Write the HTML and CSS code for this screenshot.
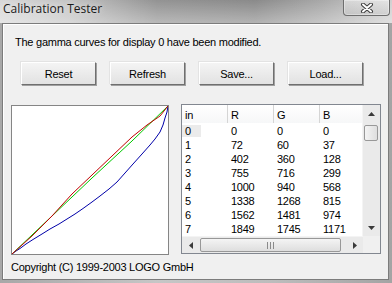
FILE: index.html
```html
<!DOCTYPE html>
<html lang="en">
<head>
  <meta charset="UTF-8">
  <title>Calibration Tester</title>
  <link rel="stylesheet" href="styles.css">
</head>
<body>
  <div class="frame">
    <div class="titlebar">
      <span class="title">Calibration Tester</span>
      <button class="close" title="Close">
        <svg width="14" height="10" viewBox="0 0 14 10">
          <path d="M3 1.5 L11 8.5 M11 1.5 L3 8.5" stroke="#3c3c3c" stroke-width="4" stroke-linecap="round"/>
          <path d="M3 1.5 L11 8.5 M11 1.5 L3 8.5" stroke="#ffffff" stroke-width="2" stroke-linecap="round"/>
        </svg>
      </button>
    </div>

    <div class="client">
      <p class="message">The gamma curves for display 0 have been modified.</p>

      <div class="buttons">
        <button class="btn">Reset</button>
        <button class="btn">Refresh</button>
        <button class="btn">Save...</button>
        <button class="btn">Load...</button>
      </div>

      <div class="main">
        <div class="curves-panel">
          <div class="curves">
            <svg width="156" height="148" viewBox="0 0 156 148">
              <!-- blue -->
              <polyline fill="none" stroke="#0000a8" stroke-width="1"
                points="0,148 4,145 8,142.5 14,138 21,133.5 30,128 38,123 47,118 55,113 63,108 71,102.5 80,96 88,90 97,83 105,76 113,67 121,58 130,48 138,39 143,33 148,26 151,19 153,12 155,6 156,0"/>
              <!-- green -->
              <polyline fill="none" stroke="#00c800" stroke-width="1"
                points="0,148 40,110 80,72 120,35 156,0"/>
              <!-- red -->
              <polyline fill="none" stroke="#c00000" stroke-width="1"
                points="0,148 20,130 40,110 60,88 80,69 100,50 120,31 135,19 148,10 156,0"/>
            </svg>
          </div>
          <p class="copyright">Copyright (C) 1999-2003 LOGO GmbH</p>
        </div>

        <div class="list">
          <div class="list-body">
            <div class="grid">
              <div class="row header">
                <div class="cell">in</div>
                <div class="cell">R</div>
                <div class="cell">G</div>
                <div class="cell">B</div>
              </div>
              <div class="row"><div class="cell focus">0</div><div class="cell">0</div><div class="cell">0</div><div class="cell">0</div></div>
              <div class="row"><div class="cell">1</div><div class="cell">72</div><div class="cell">60</div><div class="cell">37</div></div>
              <div class="row"><div class="cell">2</div><div class="cell">402</div><div class="cell">360</div><div class="cell">128</div></div>
              <div class="row"><div class="cell">3</div><div class="cell">755</div><div class="cell">716</div><div class="cell">299</div></div>
              <div class="row"><div class="cell">4</div><div class="cell">1000</div><div class="cell">940</div><div class="cell">568</div></div>
              <div class="row"><div class="cell">5</div><div class="cell">1338</div><div class="cell">1268</div><div class="cell">815</div></div>
              <div class="row"><div class="cell">6</div><div class="cell">1562</div><div class="cell">1481</div><div class="cell">974</div></div>
              <div class="row"><div class="cell">7</div><div class="cell">1849</div><div class="cell">1745</div><div class="cell">1171</div></div>
            </div>
            <div class="vscroll">
              <div class="arrow">
                <svg width="7" height="4" viewBox="0 0 7 4"><polygon points="0,4 3.5,0 7,4" fill="#3a3a3a"/></svg>
              </div>
              <div class="vtrack"><div class="vthumb"></div></div>
              <div class="arrow">
                <svg width="7" height="4" viewBox="0 0 7 4"><polygon points="0,0 3.5,4 7,0" fill="#3a3a3a"/></svg>
              </div>
            </div>
          </div>
          <div class="hscroll-row">
            <div class="hscroll">
              <div class="arrow">
                <svg width="4" height="7" viewBox="0 0 4 7"><polygon points="4,0 0,3.5 4,7" fill="#3a3a3a"/></svg>
              </div>
              <div class="htrack">
                <div class="hthumb">
                  <svg width="7" height="7" viewBox="0 0 7 7">
                    <path d="M0.5 0 V7 M3.5 0 V7 M6.5 0 V7" stroke="#8a8a8a" stroke-width="1"/>
                  </svg>
                </div>
              </div>
              <div class="arrow">
                <svg width="4" height="7" viewBox="0 0 4 7"><polygon points="0,0 4,3.5 0,7" fill="#3a3a3a"/></svg>
              </div>
            </div>
            <div class="corner"></div>
          </div>
        </div>
      </div>
    </div>
  </div>
</body>
</html>
```

FILE: styles.css
```css
body {
  margin: 0;
  width: 392px;
  height: 283px;
  overflow: hidden;
  background: linear-gradient(to right, #a8a8a8, #c6c6c6 40%, #bcbcbc 70%, #a4a4a4);
  font-family: "Liberation Sans", Arial, sans-serif;
  font-size: 11px;
  letter-spacing: -0.25px;
  color: #000;
}
.frame {
  height: 283px;
}
.titlebar {
  height: 23px;
  display: flex;
  align-items: flex-start;
  background:
    linear-gradient(to bottom, rgba(255, 255, 255, 0) 0%, rgba(255, 255, 255, 0.35) 100%),
    linear-gradient(to right, #d8d8d8 0%, #c4c4c4 18%, #939393 40%, #8a8a8a 65%, #a8a8a8 82%, #d0d0d0 100%);
}
.title {
  font-family: "Open Sans", "DejaVu Sans", sans-serif;
  font-size: 12px;
  letter-spacing: 0;
  line-height: 16px;
  padding: 1px 0 0 3px;
  color: #1a1a1a;
  text-shadow: 0 0 6px rgba(255, 255, 255, 0.7);
}
.close {
  margin-left: auto;
  margin-right: 2px;
  width: 47px;
  height: 16px;
  padding: 0;
  border: 1px solid #6e6e6e;
  border-top: none;
  border-radius: 0 0 4px 4px;
  background: linear-gradient(to bottom, rgba(255, 255, 255, 0.45), rgba(190, 190, 190, 0.35));
  box-shadow: inset 0 0 0 1px rgba(255, 255, 255, 0.35);
  display: flex;
  align-items: center;
  justify-content: center;
}
.client {
  box-sizing: border-box;
  height: 257px;
  margin: 0 3px 0 2px;
  border: 1px solid #7c7c7c;
  background: #f0f0f0;
  box-shadow: inset 1px 1px 0 #ffffff;
}
.message {
  margin: 12px 0 0 12px;
  line-height: 13px;
}
.buttons {
  display: flex;
  gap: 14px;
  margin-top: 13px;
  padding-left: 18px;
}
.btn {
  box-sizing: border-box;
  width: 75px;
  height: 23px;
  padding: 0;
  font-family: "Liberation Sans", Arial, sans-serif;
  font-size: 11px;
  letter-spacing: -0.25px;
  color: #000;
  border: 1px solid;
  border-color: #ffffff #6f6f6f #6f6f6f #ffffff;
  background: linear-gradient(to bottom, #f4f4f4, #e2e2e2);
  box-shadow: 1px 1px 0 #a0a0a0, -1px -1px 0 #e3e3e3;
}
.main {
  display: flex;
  gap: 12px;
  margin-top: 19px;
  padding-left: 8px;
}
.curves-panel {
  flex: none;
  width: 158px;
  margin-top: 1px;
}
.curves {
  box-sizing: border-box;
  width: 158px;
  height: 150px;
  border: 1px solid #858585;
  background: #ffffff;
}
.curves svg {
  display: block;
}
.copyright {
  margin: 6px 0 0 0;
  line-height: 13px;
  white-space: nowrap;
}
.list {
  box-sizing: border-box;
  width: 200px;
  height: 150px;
  border: 1px solid #828790;
  background: #ffffff;
}
.list-body {
  display: flex;
  height: 131px;
}
.grid {
  flex: 1;
  overflow: hidden;
}
.row {
  display: flex;
  height: 14px;
  line-height: 16px;
}
.cell {
  box-sizing: border-box;
  width: 46px;
  flex: none;
  padding-left: 3px;
  white-space: nowrap;
}
.cell.focus {
  background: linear-gradient(#ebebeb, #ebebeb) no-repeat 0 2px / 19px 12px;
}
.header {
  height: 18px;
  line-height: 15px;
  background: linear-gradient(to bottom, #ffffff, #f6f7f8);
}
.header .cell {
  padding-top: 3px;
  border-right: 1px solid #d5d5d5;
}
.vscroll {
  width: 17px;
  display: flex;
  flex-direction: column;
  background: #eaeaea;
  border-left: 1px solid #f4f4f4;
}
.arrow {
  width: 17px;
  height: 17px;
  flex: none;
  display: flex;
  align-items: center;
  justify-content: center;
}
.vtrack {
  flex: 1;
  padding-top: 3px;
}
.vthumb {
  box-sizing: border-box;
  width: 14px;
  height: 16px;
  margin-left: 1px;
  border: 1px solid #989898;
  border-radius: 2px;
  background: linear-gradient(to right, #f4f4f4, #dedede);
}
.hscroll-row {
  display: flex;
  height: 17px;
}
.hscroll {
  flex: 1;
  display: flex;
  background: #eaeaea;
  border-top: 1px solid #f4f4f4;
}
.htrack {
  flex: 1;
  padding-top: 1px;
}
.hthumb {
  box-sizing: border-box;
  width: 141px;
  height: 14px;
  margin-left: 1px;
  border: 1px solid #989898;
  border-radius: 2px;
  background: linear-gradient(to bottom, #f4f4f4, #dedede);
  display: flex;
  align-items: center;
  justify-content: center;
}
.hthumb svg {
  display: block;
}
.corner {
  width: 17px;
  background: #f0f0f0;
}
```
